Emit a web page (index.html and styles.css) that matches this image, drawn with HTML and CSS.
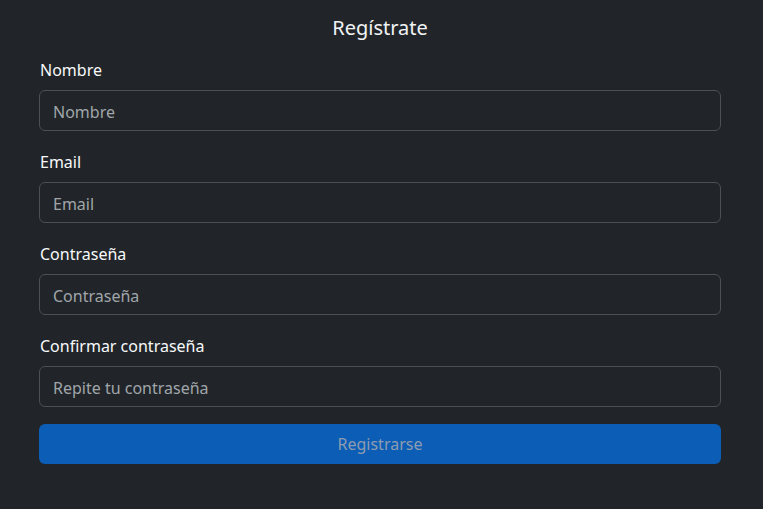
FILE: index.html
```html
<!DOCTYPE html>
<html lang="es">
<head>
<meta charset="utf-8">
<link rel="stylesheet" href="styles.css">
</head>
<body>
<main class="wrap">
  <h1 class="title">Regístrate</h1>
  <form class="form">
    <div class="group">
      <label class="label">Nombre</label>
      <input class="input" type="text" placeholder="Nombre">
    </div>
    <div class="group">
      <label class="label">Email</label>
      <input class="input" type="email" placeholder="Email">
    </div>
    <div class="group">
      <label class="label">Contraseña</label>
      <input class="input" type="password" placeholder="Contraseña">
    </div>
    <div class="group">
      <label class="label">Confirmar contraseña</label>
      <input class="input" type="password" placeholder="Repite tu contraseña">
    </div>
    <button class="btn" type="button" disabled>Registrarse</button>
  </form>
</main>
</body>
</html>
```
FILE: styles.css
```css
* { box-sizing: border-box; }
html, body { margin: 0; padding: 0; }
body {
  background: #212529;
  color: #dee2e6;
  font-family: "Noto Sans", "Open Sans", sans-serif;
  font-size: 16px;
  line-height: 24px;
  height: 509px;
}
.wrap {
  padding: 13px 42px 0 39px;
}
.title {
  margin: 0 0 15px;
  text-align: center;
  font-size: 20px;
  font-weight: 400;
  line-height: 30px;
  color: #f1f3f5;
}
.form { display: flex; flex-direction: column; }
.group { display: flex; flex-direction: column; margin-bottom: 19px; }
.label { color: #f8f9fa; margin-bottom: 8px; padding-left: 1px; }
.input {
  height: 41px;
  background: #212529;
  border: 1px solid #495057;
  border-radius: 6px;
  padding: 2px 13px 0;
  font: inherit;
  color: #dee2e6;
}
.input::placeholder { color: #a0a5aa; }
.btn {
  margin-top: -2px;
  height: 40px;
  padding-top: 1px;
  background: #0c5db6;
  border: none;
  border-radius: 6px;
  color: #8d9cb0;
  font: inherit;
}
```
